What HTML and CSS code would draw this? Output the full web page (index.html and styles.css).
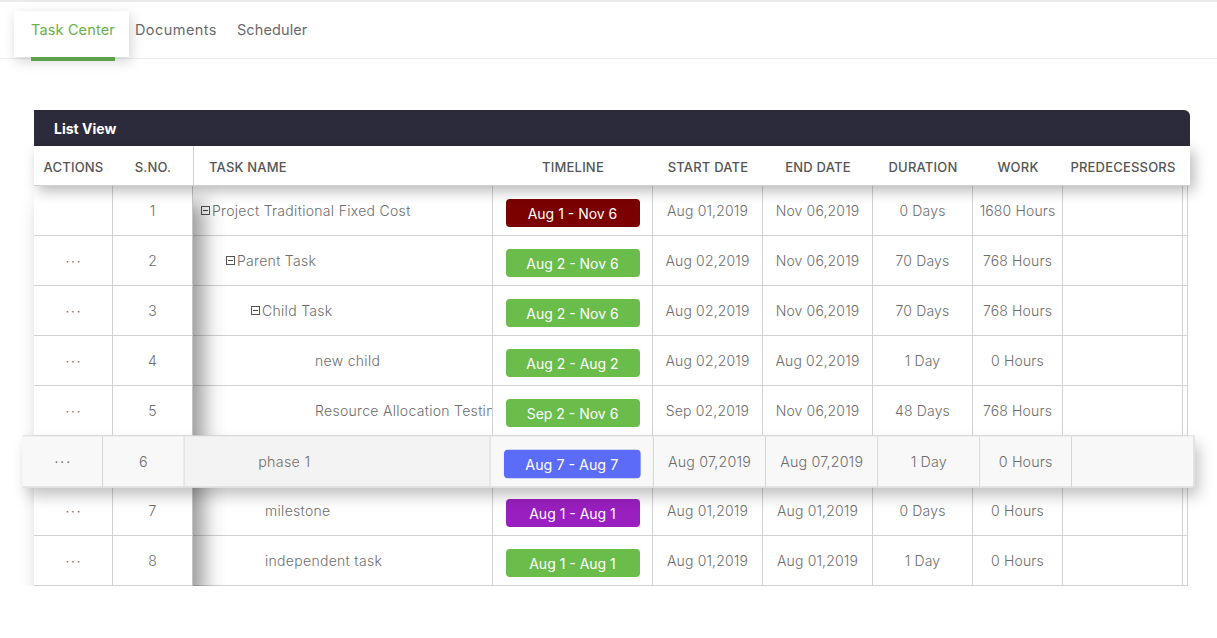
FILE: index.html
```html
<!DOCTYPE html>
<html>
<head>
<meta charset="utf-8">
<link rel="stylesheet" href="styles.css">
</head>
<body>
<nav class="tabbar">
  <a class="tab active">Task Center</a>
  <a class="tab">Documents</a>
  <a class="tab">Scheduler</a>
</nav>

<section class="panel">
  <div class="panel-title">List View</div>
  <div class="grid-head">
    <div class="hc">ACTIONS</div>
    <div class="hc">S.NO.</div>
    <div class="hc left sep">TASK NAME</div>
    <div class="hc">TIMELINE</div>
    <div class="hc">START DATE</div>
    <div class="hc">END DATE</div>
    <div class="hc">DURATION</div>
    <div class="hc">WORK</div>
    <div class="hc">PREDECESSORS</div>
    <div class="hc"></div>
  </div>

  <div class="grid-body">
    <div class="frozen">
      <div class="c dots"></div><div class="c">1</div>
      <div class="c dots">···</div><div class="c">2</div>
      <div class="c dots">···</div><div class="c">3</div>
      <div class="c dots">···</div><div class="c">4</div>
      <div class="c dots">···</div><div class="c">5</div>
      <div class="c dots under">···</div><div class="c under">6</div>
      <div class="c dots">···</div><div class="c">7</div>
      <div class="c dots">···</div><div class="c">8</div>
    </div>
    <div class="main">
      <div class="c name lv0"><span class="tog"></span>Project Traditional Fixed Cost</div>
      <div class="c"><span class="pill red">Aug 1 - Nov 6</span></div>
      <div class="c">Aug 01,2019</div><div class="c">Nov 06,2019</div><div class="c">0 Days</div><div class="c">1680 Hours</div><div class="c"></div><div class="c"></div>

      <div class="c name lv1"><span class="tog"></span>Parent Task</div>
      <div class="c"><span class="pill green">Aug 2 - Nov 6</span></div>
      <div class="c">Aug 02,2019</div><div class="c">Nov 06,2019</div><div class="c">70 Days</div><div class="c">768 Hours</div><div class="c"></div><div class="c"></div>

      <div class="c name lv2"><span class="tog"></span>Child Task</div>
      <div class="c"><span class="pill green">Aug 2 - Nov 6</span></div>
      <div class="c">Aug 02,2019</div><div class="c">Nov 06,2019</div><div class="c">70 Days</div><div class="c">768 Hours</div><div class="c"></div><div class="c"></div>

      <div class="c name lv3">new child</div>
      <div class="c"><span class="pill green">Aug 2 - Aug 2</span></div>
      <div class="c">Aug 02,2019</div><div class="c">Aug 02,2019</div><div class="c">1 Day</div><div class="c">0 Hours</div><div class="c"></div><div class="c"></div>

      <div class="c name lv3">Resource Allocation Testing</div>
      <div class="c"><span class="pill green">Sep 2 - Nov 6</span></div>
      <div class="c">Sep 02,2019</div><div class="c">Nov 06,2019</div><div class="c">48 Days</div><div class="c">768 Hours</div><div class="c"></div><div class="c"></div>

      <div class="c name lvx under">phase 1</div>
      <div class="c under"><span class="pill blue">Aug 7 - Aug 7</span></div>
      <div class="c under">Aug 07,2019</div><div class="c under">Aug 07,2019</div><div class="c under">1 Day</div><div class="c under">0 Hours</div><div class="c"></div><div class="c"></div>

      <div class="c name lvx">milestone</div>
      <div class="c"><span class="pill purple">Aug 1 - Aug 1</span></div>
      <div class="c">Aug 01,2019</div><div class="c">Aug 01,2019</div><div class="c">0 Days</div><div class="c">0 Hours</div><div class="c"></div><div class="c"></div>

      <div class="c name lvx">independent task</div>
      <div class="c"><span class="pill green">Aug 1 - Aug 1</span></div>
      <div class="c">Aug 01,2019</div><div class="c">Aug 01,2019</div><div class="c">1 Day</div><div class="c">0 Hours</div><div class="c"></div><div class="c"></div>
    </div>

    <div class="drag-row">
      <div class="c dots">···</div>
      <div class="c">6</div>
      <div class="c name lvx">phase 1</div>
      <div class="c"><span class="pill blue">Aug 7 - Aug 7</span></div>
      <div class="c">Aug 07,2019</div>
      <div class="c">Aug 07,2019</div>
      <div class="c">1 Day</div>
      <div class="c">0 Hours</div>
      <div class="c"></div>
    </div>
  </div>
</section>
</body>
</html>
```
FILE: styles.css
```css
* { box-sizing: border-box; }
html, body { margin: 0; padding: 0; background: #fff; }
body {
  font-family: "Inter", "Liberation Sans", sans-serif;
  font-feature-settings: "pnum" 1;
  font-variant-numeric: proportional-nums;
  color: #666;
}

.tabbar {
  display: flex;
  align-items: flex-start;
  height: 59px;
  padding: 9px 0 0 14px;
  border-top: 2px solid #e9e9e9;
  border-bottom: 1px solid #ececec;
}
.tab {
  display: flex;
  align-items: flex-start;
  padding: 10px 10px 0 9px;
  height: 46px;
  font-size: 14.5px;
  letter-spacing: 0.45px;
  color: #6a6a6a;
}
.tab.active {
  position: relative;
  padding: 10px 14px 0 17px;
  margin-right: -3px;
  background: #fff;
  color: #6ab04c;
  font-size: 14.5px;
  letter-spacing: 0.15px;
  box-shadow: 2px 4px 12px rgba(0,0,0,0.18);
}
.tab.active::after {
  content: "";
  position: absolute;
  left: 17px;
  right: 14px;
  bottom: -4px;
  height: 4px;
  background: #5ea14a;
}
.tab + .tab + .tab { padding-left: 10px; letter-spacing: 0.1px; }

.panel {
  margin: 51px 0 0 34px;
  width: 1156px;
}
.panel-title {
  height: 36px;
  background: #2c2b3c;
  color: #fff;
  font-weight: 700;
  font-size: 14px;
  display: flex;
  align-items: center;
  padding-left: 20px;
  border-radius: 0 6px 0 0;
}

.grid-head {
  position: relative;
  z-index: 3;
  display: grid;
  grid-template-columns: 79px 80px 300px 160px 110px 110px 100px 90px 120px 7px;
  height: 40px;
  background: #fff;
  border-bottom: 1px solid #d0d0d0;
  box-shadow: 4px 5px 14px rgba(0,0,0,0.28);
}
.hc {
  display: flex;
  align-items: center;
  justify-content: center;
  padding-top: 2px;
  font-size: 13px;
  font-weight: 500;
  letter-spacing: 0.2px;
  color: #555;
}
.hc.left { justify-content: flex-start; padding-left: 15px; }
.hc.sep { border-left: 1px solid #d0d0d0; }

.grid-body {
  position: relative;
  display: flex;
  width: 1154px;
}
.frozen {
  position: relative;
  z-index: 2;
  display: grid;
  grid-template-columns: 79px 80px;
  grid-auto-rows: 50px;
  background: #fff;
  box-shadow: 10px 16px 20px rgba(0,0,0,0.42);
}
.main {
  display: grid;
  grid-template-columns: 300px 160px 110px 110px 100px 90px 120px 5px;
  grid-auto-rows: 50px;
  background: #fff;
}
.c {
  display: flex;
  align-items: center;
  justify-content: center;
  border-right: 1px solid #d2d2d2;
  border-bottom: 1px solid #d2d2d2;
  font-size: 14px;
  font-weight: 300;
  letter-spacing: 0.15px;
  color: #6e6e6e;
  white-space: nowrap;
  overflow: hidden;
}
.frozen .c:nth-child(2n) { border-right: 1px solid #c4c4c4; }
.dots { color: #777; letter-spacing: 2px; font-size: 13px; font-weight: 400; padding-left: 2px; }

.name { justify-content: flex-start; letter-spacing: 0.3px; }
.lv0 { padding-left: 8px; }
.lv1 { padding-left: 33px; }
.lv2 { padding-left: 58px; }
.lv3 { padding-left: 122px; }
.lvx { padding-left: 72px; }

.tog {
  position: relative;
  display: inline-block;
  width: 9px;
  height: 9px;
  border: 1px solid #555;
  margin-right: 2px;
  flex: none;
}
.tog::after {
  content: "";
  position: absolute;
  left: 1px;
  right: 1px;
  top: 3px;
  height: 1px;
  background: #444;
}

.pill {
  display: flex;
  align-items: center;
  justify-content: center;
  width: 134px;
  height: 28px;
  margin-top: 5px;
  border-radius: 4px;
  color: #fff;
  font-size: 14px;
  font-weight: 400;
  letter-spacing: 0;
}
.red { background: #7b0101; }
.green { background: #6abd4b; }
.blue { background: #5b6cf9; }
.purple { background: #991fbe; }

.drag-row {
  position: absolute;
  z-index: 4;
  left: 0;
  top: 250px;
  width: 1149px;
  height: 51px;
  display: grid;
  grid-template-columns: 79px 80px 300px 160px 110px 110px 100px 90px 120px;
  background: #f7f7f7;
  border-top: 1px solid #d2d2d2;
  transform: scale(1.02);
  box-shadow: 4px 8px 14px rgba(0,0,0,0.25);
}
.drag-row .c { background: #f8f8f8; }
.drag-row .c:nth-child(3) { background: #f3f3f3; }
.under { visibility: hidden; }
```
